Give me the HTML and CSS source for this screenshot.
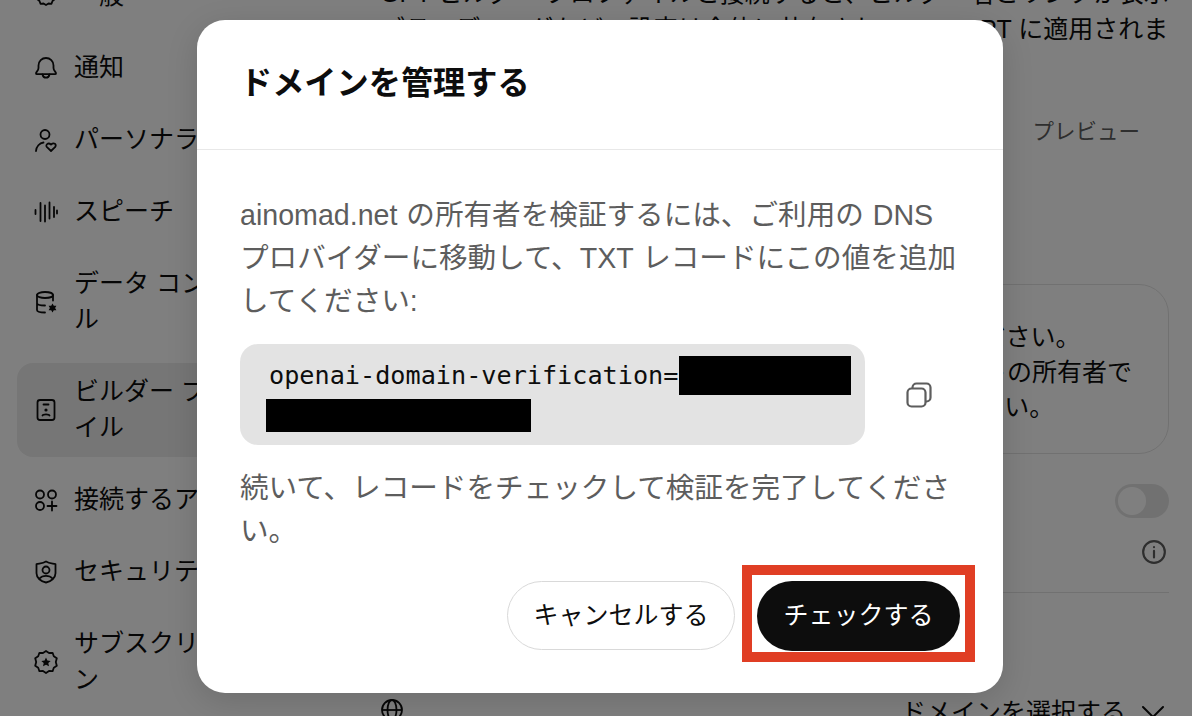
FILE: index.html
```html
<!DOCTYPE html>
<html lang="ja">
<head>
<meta charset="utf-8">
<title>ドメインを管理する</title>
<link rel="stylesheet" href="styles.css">
</head>
<body>
<div class="page">
  <nav class="sidebar">
    <a class="nav-item"><svg class="icon" viewBox="0 0 24 24"><path d="M12 3l2.500 1.500 3-.3 1 2.800 2.500 2-1 3 1 3-2.500 2-1 2.800-3-.3L12 21l-2.500-1.500-3 .3-1-2.800-2.500-2 1-3-1-3 2.500-2 1-2.800 3 .3z"/></svg><span class="nav-label">一般</span></a>
    <a class="nav-item"><svg class="icon" viewBox="0 0 24 24"><path d="M2 17.200c0-1.200 2.500-2.400 2.500-5.200V9.500a7.500 7.500 0 0 1 15 0V12c0 2.800 2.500 4 2.500 5.200 0 .6-.4 1-1 1H3c-.6 0-1-.4-1-1z"/><path d="M8.500 18.500c.4 2 1.700 3.200 3.500 3.200s3.100-1.200 3.500-3.200"/></svg><span class="nav-label">通知</span></a>
    <a class="nav-item"><svg class="icon" viewBox="0 0 24 24"><circle cx="11" cy="6.500" r="4.500"/><path d="M2 23c.3-4.500 3.500-8 7.500-8.500"/><path d="M17 23l-4-3.800c-2-2.200 1-5.200 4-2.700 3-2.500 6-.5 4 2.700z"/></svg><span class="nav-label">パーソナライズ</span></a>
    <a class="nav-item"><svg class="icon" viewBox="0 0 24 24"><path d="M1.500 10v4M6.500 3v18M11 5.500v16M15.500 2.500v16M20 7v10M23 10.500v3"/></svg><span class="nav-label">スピーチ</span></a>
    <a class="nav-item"><svg class="icon" viewBox="0 0 24 24"><ellipse cx="11" cy="5" rx="8" ry="3"/><path d="M3 5v15c0 1.500 3 2.500 8 2.500M19 5v5.500M3 13c0 1.500 3 2.500 8 2.500"/><path class="solid" d="M18.500 13.500l1.300 2.200h2.600l-1.300 2.300 1.300 2.300h-2.600l-1.300 2.200-1.300-2.200h-2.600l1.300-2.300-1.300-2.300h2.600z"/></svg><span class="nav-label">データ コントロール</span></a>
    <a class="nav-item active"><svg class="icon" viewBox="0 0 24 24"><rect x="3.500" y="2" width="17" height="20" rx="2.500"/><path d="M9.500 6.500h5M8.500 17.500c.5-1.500 6.500-1.500 7 0"/><circle class="solid" cx="12" cy="12" r="1.600"/></svg><span class="nav-label">ビルダー プロファイル</span></a>
    <a class="nav-item"><svg class="icon" viewBox="0 0 24 24"><circle cx="6" cy="6.500" r="4"/><circle cx="18" cy="6.500" r="4"/><circle cx="6" cy="18" r="4"/><path d="M18 13.500v9M13.500 18h9"/></svg><span class="nav-label">接続するアプリ</span></a>
    <a class="nav-item"><svg class="icon" viewBox="0 0 24 24"><path d="M12 1.500c3 1.900 6 1.900 9.500 2.700v9c0 4.700-4.500 8.300-9.500 9.300-5-1-9.500-4.600-9.500-9.300v-9C6 3.400 9 3.400 12 1.500z"/><circle cx="12" cy="10" r="3.500"/><path d="M5.500 18.500c3-3.500 10-3.500 13 0"/></svg><span class="nav-label">セキュリティ</span></a>
    <a class="nav-item"><svg class="icon" viewBox="0 0 24 24"><path d="M12 1l3 2 3.600-.2 1.200 3.400 3 2-1 3.800 1 3.800-3 2-1.200 3.400-3.600-.2-3 2-3-2-3.600.2-1.200-3.400-3-2 1-3.800-1-3.800 3-2 1.200-3.400 3.600.2z"/><path class="solid" d="M12 7.500l1.400 3 3.300.4-2.400 2.200.7 3.200-3-1.600-3 1.600.7-3.200-2.400-2.200 3.300-.4z"/></svg><span class="nav-label">サブスクリプション</span></a>
  </nav>
  <main class="settings">
    <p class="intro">GPT ビルダー プロファイルと接続すると、ビルダー名とリンクが表示され、<br>ブランディングなどの設定は全体に共有され、この GPT に適用されま<br>す。</p>
    <div class="preview-label">プレビュー</div>
    <div class="notice">サイトをプロファイルに追加するには、確認してください。<br>そのためには、あなたご自身がまずこのウェブサイトの所有者で<br>あることを、以下の手順に沿って必ず確認してください。</div>
    <div class="toggle-row"><span class="toggle"><span class="knob"></span></span></div>
    <div class="info-row"><svg class="info" viewBox="0 0 24 24"><circle cx="12" cy="12" r="10"/><path d="M12 11v6"/><circle class="solid-gray" cx="12" cy="7.500" r="1"/></svg></div>
    <div class="rule"></div>
    <div class="domain-row">
      <svg class="globe" viewBox="0 0 24 24"><circle cx="12" cy="12" r="10"/><ellipse cx="12" cy="12" rx="4.500" ry="10"/><path d="M2 12h20"/></svg>
      <span class="domain-select">ドメインを選択する<svg class="chev" viewBox="0 0 24 24"><path d="M2 7l10 10 10-10"/></svg></span>
    </div>
  </main>
</div>
<div class="overlay"></div>
<section class="modal">
  <header class="modal-head"><h1>ドメインを管理する</h1></header>
  <div class="modal-body">
    <p class="text">ainomad.net の所有者を検証するには、ご利用の DNS プロバイダーに移動して、TXT レコードにこの値を追加してください:</p>
    <div class="code-row">
      <div class="code"><span class="code-line"><span class="code-text">openai-domain-verification=</span><span class="redact redact-a"></span></span><span class="redact redact-b"></span></div>
      <svg class="copy" viewBox="0 0 26 26"><rect x="6.500" y="1.500" width="18" height="18" rx="4"/><rect class="front" x="1.500" y="6.500" width="18" height="18" rx="4"/></svg>
    </div>
    <p class="text">続いて、レコードをチェックして検証を完了してください。</p>
    <div class="actions">
      <button class="btn btn-ghost">キャンセルする</button>
      <span class="highlight"><button class="btn btn-dark">チェックする</button></span>
    </div>
  </div>
</section>
</body>
</html>
```
FILE: styles.css
```css
* { box-sizing: border-box; }
html, body { margin: 0; height: 100%; }
body {
  width: 1192px; height: 716px; overflow: hidden; position: relative;
  background: #fff; color: #0d0d0d;
  font-family: "Liberation Sans", "Noto Sans CJK JP", sans-serif;
}
.page { display: flex; height: 716px; overflow: hidden; }
.sidebar {
  width: 362px; flex: none; padding-left: 17px; margin-top: -33px;
  display: flex; flex-direction: column; gap: 14px;
}
.nav-item {
  display: flex; align-items: center; gap: 16px; min-height: 58px; width: 330px;
  padding: 11px 17px; border-radius: 16px; font-size: 25px; line-height: 36px;
}
.nav-item.active { background: #ececec; }
.nav-label { width: 212px; flex: none; transform: translateY(-1px); }
.icon { width: 24px; height: 24px; flex: none; fill: none; stroke: #0d0d0d; stroke-width: 1.800; stroke-linecap: round; stroke-linejoin: round; }
.icon .solid { fill: #0d0d0d; stroke: none; }
.settings { flex: 1; padding-right: 23px; font-size: 25px; min-width: 0; }
.intro { margin: -25px 0 0 18px; line-height: 36px; height: 108px; overflow: hidden; white-space: nowrap; }
.preview-label { text-align: right; margin: 33px 29px 0 0; font-size: 21.500px; line-height: 32px; color: #5d5d5d; }
.notice { margin: 136px 0 0 18px; height: 170px; border: 1px solid #e3e3e3; border-radius: 30px; padding: 35px 0 0 26px; line-height: 35px; white-space: nowrap; overflow: hidden; }
.toggle-row { display: flex; justify-content: flex-end; margin-top: 30px; }
.toggle { width: 54px; height: 34px; border-radius: 17px; background: #e3e3e3; padding: 3px; display: block; }
.knob { display: block; width: 28px; height: 28px; border-radius: 50%; background: #fff; }
.info-row { display: flex; justify-content: flex-end; margin-top: 21px; }
.info { width: 26px; height: 26px; margin-right: 2px; fill: none; stroke: #5d5d5d; stroke-width: 2; stroke-linecap: round; }
.info .solid-gray { fill: #5d5d5d; stroke: none; }
.rule { margin: 27px 0 0 18px; height: 1px; background: #e3e3e3; }
.domain-row { display: flex; justify-content: space-between; align-items: center; margin: 101px 0 0 18px; line-height: 36px; }
.globe { width: 24px; height: 24px; margin-top: -4px; fill: none; stroke: #0d0d0d; stroke-width: 1.800; }
.domain-select { display: flex; align-items: center; gap: 15px; padding-right: 4px; }
.chev { width: 24px; height: 24px; fill: none; stroke: #0d0d0d; stroke-width: 2; stroke-linecap: round; stroke-linejoin: round; }
.overlay { position: absolute; inset: 0; background: rgba(0,0,0,.5); }
.modal {
  position: absolute; left: 197px; top: 20px; width: 806px; height: 673px;
  background: #fff; border-radius: 28px; overflow: hidden;
  box-shadow: 0 8px 32px rgba(0,0,0,.14);
}
.modal-head { height: 130px; border-bottom: 1px solid #e8e8e8; padding: 41px 43px 0; }
.modal-head h1 { margin: 0; font-size: 32.200px; line-height: 44px; font-weight: 700; color: #0d0d0d; }
.modal-body { padding: 44px 43px 0; }
.text { margin: 0; font-size: 28.600px; line-height: 43px; word-spacing: 1px; color: #5d5d5d; }
.code-row { display: flex; align-items: center; margin: 21px 0 22px; }
.code {
  width: 625px; height: 101px; flex: none; border-radius: 18px; background: #e3e3e3; padding: 12px 14px 0 26px;
  color: #0d0d0d;
}
.code-line { display: flex; height: 39px; align-items: center; padding-left: 3px; white-space: nowrap; }
.code-text { width: 410px; flex: none; font-family: "DejaVu Sans Mono", monospace; font-size: 25.200px; line-height: 39px; }
.redact { display: block; background: #000; flex: none; }
.redact-a { width: 172px; height: 39px; }
.redact-b { width: 265px; height: 33px; margin-top: 4px; }
.copy { width: 26px; height: 26px; margin-left: 41px; fill: #fff; stroke: #5d5d5d; stroke-width: 2.200; }
.actions { display: flex; justify-content: flex-end; align-items: flex-end; margin: 12px -15px 0 0; gap: 7px; }
.btn { font: inherit; font-size: 25px; border-radius: 35px; height: 69px; padding: 0 0 6px; cursor: pointer; }
.btn-ghost { width: 228px; margin-bottom: 12px; background: #fff; border: 1px solid #d9d9d9; color: #0d0d0d; }
.btn-dark { display: block; width: 203px; height: 70px; background: #0d0d0d; border: 0; color: #fff; }
.highlight { display: block; border: 10px solid #e03e24; padding: 6px 5px 1px 5px; }
```
